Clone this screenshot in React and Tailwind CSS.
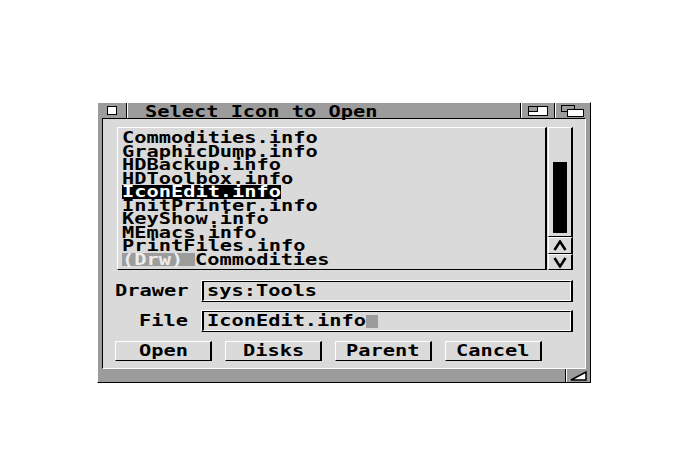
import React from "react";

function T({ s, className = "" }) {
  return (
    <span
      className={`inline-block whitespace-pre ${className}`}
      style={{ width: `${s.length * 12.2}px` }}
    >
      <span className="inline-block origin-left scale-x-[1.27]">{s}</span>
    </span>
  );
}

const files = [
  "Commodities.info",
  "GraphicDump.info",
  "HDBackup.info",
  "HDToolbox.info",
  "IconEdit.info",
  "InitPrinter.info",
  "KeyShow.info",
  "MEmacs.info",
  "PrintFiles.info",
];

const raised =
  "border-t border-l border-b border-r-2 border-t-white border-l-white border-b-black border-r-black";

function Field({ children }) {
  return (
    <div className={`w-[372px] h-[22px] ${raised}`}>
      <div className="h-full border-t border-l-2 border-b border-r border-t-black border-l-black border-b-white border-r-white flex items-center pl-[3px] leading-[18px]">
        {children}
      </div>
    </div>
  );
}

function Button({ label }) {
  return (
    <div className={`w-[97px] h-[20px] ${raised} flex items-center justify-center leading-[18px]`}>
      <T s={label} />
    </div>
  );
}

export default function App() {
  return (
    <div className="w-[694px] h-[453px] bg-white pt-[102px] pl-[97px] font-['DejaVu_Sans_Mono',monospace] font-bold text-[16px] text-black">
      <div className="w-[494px] h-[281px] flex flex-col bg-[#9c9c9c] border border-t-white border-l-white border-b-black border-r-black">
        {/* Title bar */}
        <div className="h-[15px] flex leading-[15px]">
          <div className="w-[29px] flex items-center justify-center border-r border-r-black">
            <div className="w-[10px] h-[9px] bg-white border border-black" />
          </div>
          <div className="flex-1 shadow-[inset_1px_0_0_#fff] pl-[18px] flex items-center pt-[1px]">
            <T s="Select Icon to Open" />
          </div>
          <div className="w-[34px] border-l border-l-black shadow-[inset_1px_0_0_#fff] flex items-center justify-center">
            <svg width="20" height="10" viewBox="0 0 20 10">
              <rect x="0.5" y="0.5" width="19" height="9" fill="#fff" stroke="#000" />
              <rect x="0.5" y="0.5" width="9" height="5" fill="#9c9c9c" stroke="#000" />
            </svg>
          </div>
          <div className="w-[36px] border-l border-l-black shadow-[inset_1px_0_0_#fff] flex items-center justify-center">
            <svg width="23" height="12" viewBox="0 0 23 12">
              <rect x="0.5" y="0.5" width="13" height="6" fill="#9c9c9c" stroke="#000" />
              <rect x="6.5" y="4.5" width="16" height="7" fill="#fff" stroke="#000" />
            </svg>
          </div>
        </div>

        {/* Middle */}
        <div className="h-[251px] flex">
          <div className="w-[4px]" />
          <div className="w-[484px] h-full bg-[#dadada] border-t border-l border-b border-r border-t-black border-l-black border-b-white border-r-white pt-[8px] pl-[12px] flex flex-col">
            {/* list + scroller */}
            <div className="flex">
              <div className={`ml-[2px] w-[430px] h-[143px] ${raised} pt-[3px] pl-[4px] overflow-hidden`}>
                {files.map((f) => (
                  <div key={f} className="h-[13.56px] leading-[13.56px]">
                    {f === "IconEdit.info" ? (
                      <T s={f} className="bg-black text-white" />
                    ) : (
                      <T s={f} />
                    )}
                  </div>
                ))}
                <div className="h-[13.56px] leading-[13.56px]">
                  <T s="(Drw) " className="bg-[#9c9c9c] text-[#ececec]" />
                  <T s="Commodities" />
                </div>
              </div>
              <div className="ml-[1px] w-[25px] h-[143px] flex flex-col">
                <div className={`flex-1 ${raised}`}>
                  <div className="mt-[34px] ml-[4px] w-[14px] h-[71px] bg-black" />
                </div>
                <div className={`h-[17px] ${raised} flex items-center justify-center`}>
                  <svg width="14" height="11" viewBox="0 0 14 11">
                    <polyline points="1.5,10 7,1.5 12.5,10" fill="none" stroke="#000" strokeWidth="2.5" />
                  </svg>
                </div>
                <div className={`h-[16px] ${raised} flex items-center justify-center`}>
                  <svg width="14" height="11" viewBox="0 0 14 11">
                    <polyline points="1.5,1 7,9.5 12.5,1" fill="none" stroke="#000" strokeWidth="2.5" />
                  </svg>
                </div>
              </div>
            </div>

            {/* Drawer */}
            <div className="mt-[10px] h-[22px] flex items-center">
              <div className="w-[73px] flex justify-end">
                <T s="Drawer" />
              </div>
              <div className="ml-[13px]">
                <Field>
                  <T s="sys:Tools" />
                </Field>
              </div>
            </div>

            {/* File */}
            <div className="mt-[8px] h-[22px] flex items-center">
              <div className="w-[73px] flex justify-end">
                <T s="File" />
              </div>
              <div className="ml-[13px]">
                <Field>
                  <T s="IconEdit.info" />
                  <span className="inline-block w-[12px] h-[13px] bg-[#9c9c9c]" />
                </Field>
              </div>
            </div>

            {/* Buttons */}
            <div className="mt-[9px] flex gap-[13px]">
              <Button label="Open" />
              <Button label="Disks" />
              <Button label="Parent" />
              <Button label="Cancel" />
            </div>
          </div>
          <div className="flex-1" />
        </div>

        {/* Bottom bar */}
        <div className="flex-1 flex justify-end">
          <div className="w-[25px] h-full border-l border-l-black shadow-[inset_1px_0_0_#fff] flex items-center justify-center">
            <svg width="17" height="10" viewBox="0 0 17 10">
              <polygon points="1,9 16,9 16,1" fill="#fff" stroke="#000" strokeWidth="1.5" />
            </svg>
          </div>
        </div>
      </div>
    </div>
  );
}
